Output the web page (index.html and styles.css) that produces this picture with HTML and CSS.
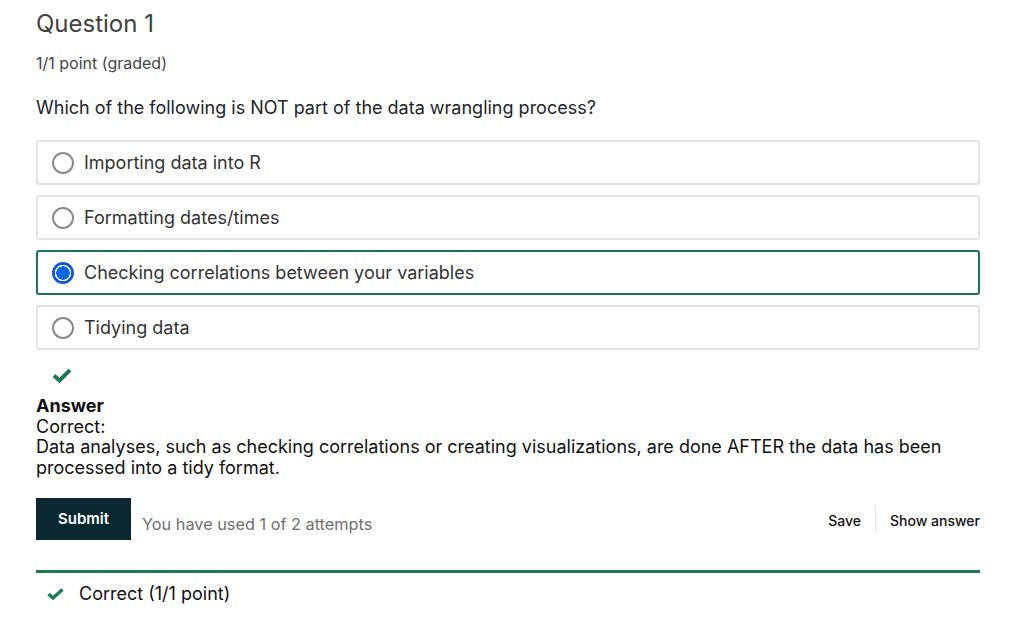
FILE: index.html
```html
<!DOCTYPE html>
<html>
<head>
<meta charset="utf-8">
<link rel="stylesheet" href="styles.css">
</head>
<body>
<div class="problem">
  <h3 class="title">Question 1</h3>
  <div class="points">1/1 point (graded)</div>
  <p class="prompt">Which of the following is NOT part of the data wrangling process?</p>
  <div class="options">
    <label class="option"><span class="radio"></span><span class="opt-text">Importing data into R</span></label>
    <label class="option"><span class="radio"></span><span class="opt-text">Formatting dates/times</span></label>
    <label class="option selected"><span class="radio checked"></span><span class="opt-text">Checking correlations between your variables</span></label>
    <label class="option"><span class="radio"></span><span class="opt-text">Tidying data</span></label>
  </div>
  <div class="status-check">
    <svg width="20" height="16" viewBox="0 0 20 16"><path d="M2 8.5 L7.5 13.5 L18 3" fill="none" stroke="#1d7a52" stroke-width="4" stroke-linejoin="miter"/></svg>
  </div>
  <div class="answer">
    <div class="answer-head">Answer</div>
    <div>Correct:</div>
    <div>Data analyses, such as checking correlations or creating visualizations, are done AFTER the data has been processed into a tidy format.</div>
  </div>
  <div class="actions">
    <button class="submit">Submit</button>
    <span class="attempts">You have used 1 of 2 attempts</span>
    <div class="spacer"></div>
    <button class="link">Save</button>
    <span class="divider"></span>
    <button class="link">Show answer</button>
  </div>
  <div class="notification">
    <svg width="17" height="14" viewBox="0 0 17 14"><path d="M1.5 7 L6 11 L15.5 2.5" fill="none" stroke="#1d7a52" stroke-width="3.4"/></svg>
    <span>Correct (1/1 point)</span>
  </div>
</div>
</body>
</html>
```
FILE: styles.css
```css
body {
  margin: 0;
  background: #fff;
  font-family: Inter, "Noto Sans", sans-serif;
  color: #212529;
}
.problem {
  width: 944px;
  padding-left: 36px;
}
.title {
  margin: 0;
  padding-top: 9px;
  font-size: 24px;
  font-weight: 400;
  line-height: 29px;
  color: #414141;
}
.points {
  margin-top: 15px;
  font-size: 16px;
  line-height: 20px;
  color: #454545;
}
.prompt {
  margin: 24px 0 0;
  font-size: 18px;
  line-height: 22px;
  color: #212529;
}
.options {
  margin-top: 21px;
  display: flex;
  flex-direction: column;
  gap: 10px;
}
.option {
  display: flex;
  align-items: center;
  height: 45px;
  box-sizing: border-box;
  border: 2px solid #e3e3e3;
  border-radius: 3px;
  padding-left: 14px;
  font-size: 18px;
  color: #333;
}
.option.selected {
  border-color: #157651;
}
.radio {
  width: 22px;
  height: 22px;
  box-sizing: border-box;
  border: 2px solid #8a8a8a;
  border-radius: 50%;
  margin-right: 10px;
  flex: none;
}
.radio.checked {
  border: 2px solid #0a5cd5;
  background: radial-gradient(circle, #0d66e8 0 6.5px, #fff 7px 8px, #0a5cd5 8.5px);
}
.opt-text {
  line-height: 22px;
}
.status-check {
  margin-top: 17px;
  padding-left: 16px;
  height: 16px;
}
.status-check svg { display: block; }
.answer {
  margin-top: 13px;
  font-size: 18px;
  line-height: 20.7px;
  color: #111;
}
.answer-head {
  font-weight: 700;
}
.actions {
  margin-top: 19px;
  display: flex;
  align-items: center;
}
.submit {
  height: 42px;
  width: 95px;
  border: none;
  background: #0a2830;
  color: #fff;
  font-family: inherit;
  font-weight: 600;
  font-size: 15px;
  padding: 0;
}
.attempts {
  margin-left: 11px;
  margin-top: 10px;
  font-size: 16.3px;
  color: #707070;
}
.spacer { flex: 1; }
.link {
  background: none;
  border: none;
  font-family: inherit;
  font-size: 14px;
  font-weight: 500;
  color: #111;
  padding: 0;
  margin-top: 4px;
}
.divider {
  width: 1px;
  height: 27px;
  background: #e6e6e6;
  margin: 0 14px 0 14px;
}
.notification {
  margin-top: 30px;
  border-top: 3px solid #1d7a52;
  display: flex;
  align-items: center;
  height: 42px;
  padding-left: 11px;
  font-size: 18px;
  color: #111;
}
.notification svg {
  margin-right: 15px;
}
```
